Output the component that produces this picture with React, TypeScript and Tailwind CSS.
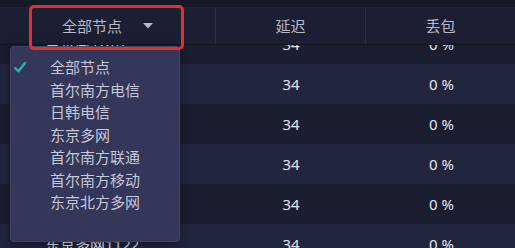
import React from "react";

const rows = [
  { name: "首尔南方电信", delay: "34", loss: "0 %" },
  { name: "首尔南方电信", delay: "34", loss: "0 %" },
  { name: "日韩电信060", delay: "34", loss: "0 %" },
  { name: "东京多网", delay: "34", loss: "0 %" },
  { name: "首尔南方联通", delay: "34", loss: "0 %" },
  { name: "东京多网1122", delay: "34", loss: "0 %" },
];

const options = [
  "全部节点",
  "首尔南方电信",
  "日韩电信",
  "东京多网",
  "首尔南方联通",
  "首尔南方移动",
  "东京北方多网",
];

export default function App() {
  return (
    <div
      className="relative w-[515px] h-[248px] overflow-hidden bg-[#171929] flex flex-col"
      style={{ fontFamily: '"Noto Sans", "Noto Sans CJK SC", sans-serif' }}
    >
      <div className="h-[8px] shrink-0 bg-[#161827] border-b border-[#23253a]" />
      <div className="grid grid-cols-[216px_150px_149px] h-[37px] shrink-0 bg-[#1c1e33] border-b border-[#121320] text-[15px] text-[#b9bac8]">
        <div className="flex items-center justify-center gap-[21px] border-r border-[#2c2e48]">
          <span>全部节点</span>
          <svg width="10" height="6" viewBox="0 0 10 6">
            <path d="M0 0 L10 0 L5 5.5 Z" fill="#b9bac8" />
          </svg>
        </div>
        <div className="flex items-center justify-center border-r border-[#2c2e48]">
          <span>延迟</span>
        </div>
        <div className="flex items-center justify-center">
          <span>丢包</span>
        </div>
      </div>
      <div className="flex-1 overflow-hidden">
        <div className="-mt-[21px]">
          {rows.map((r, i) => (
            <div
              key={i}
              className={
                "grid grid-cols-[216px_150px_149px] h-[40px] items-center text-[15px] text-[#e4e4ec] " +
                (i % 2 === 0 ? "bg-[#1b1d30]" : "bg-[#22253e]")
              }
            >
              <div className="pl-[45px] text-[#e4e4ec]">{r.name}</div>
              <div className="text-center">{r.delay}</div>
              <div className="text-center pl-[2px]">{r.loss}</div>
            </div>
          ))}
        </div>
      </div>

      <div className="absolute left-[10px] top-[46px] w-[170px] h-[196px] rounded-[4px] bg-[#34365a] border border-[#404269] shadow-[0_2px_10px_rgba(0,0,0,0.45)] pt-[9px]">
        {options.map((o, i) => (
          <div
            key={o}
            className="relative h-[22.5px] leading-[22.5px] pl-[39px] text-[15px] text-[#c6c7d6]"
          >
            {i === 0 && (
              <svg
                className="absolute left-[3px] top-[6px]"
                width="12"
                height="11"
                viewBox="0 0 12 11"
              >
                <path
                  d="M1.2 6 L4.5 9.3 L10.8 1.2"
                  fill="none"
                  stroke="#2bb3ae"
                  strokeWidth="2.4"
                  strokeLinecap="round"
                  strokeLinejoin="round"
                />
              </svg>
            )}
            {o}
          </div>
        ))}
      </div>

      <div className="absolute left-[29px] top-[5px] w-[155px] h-[45px] rounded-[5px] border-[3px] border-[#e3302a]" />
    </div>
  );
}
